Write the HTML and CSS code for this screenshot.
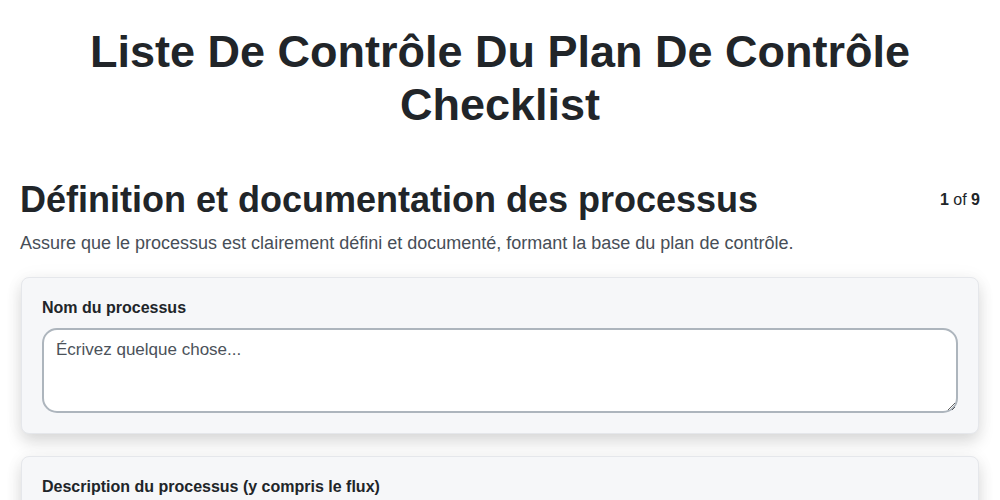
FILE: index.html
```html
<!DOCTYPE html>
<html lang="fr">
<head>
    <meta charset="UTF-8">
    <meta name="viewport" content="width=device-width, initial-scale=1.0">
    <title>Liste De Contrôle Du Plan De Contrôle Checklist</title>
    <link rel="stylesheet" href="styles.css">
</head>
<body>
    <div class="page">
        <h1 class="title">Liste De Contrôle Du Plan De Contrôle Checklist</h1>

        <div class="section-header">
            <h2>Définition et documentation des processus</h2>
            <div class="step"><b>1</b> of <b>9</b></div>
        </div>
        <p class="section-desc">Assure que le processus est clairement défini et documenté, formant la base du plan de contrôle.</p>

        <div class="card">
            <label for="nom">Nom du processus</label>
            <textarea id="nom" placeholder="Écrivez quelque chose..."></textarea>
        </div>

        <div class="card">
            <label for="desc">Description du processus (y compris le flux)</label>
            <textarea id="desc" placeholder="Écrivez quelque chose..."></textarea>
        </div>
    </div>
</body>
</html>
```

FILE: styles.css
```css
body {
    font-family: 'Liberation Sans', Arial, sans-serif;
    color: #212529;
    background-color: #ffffff;
    margin: 0;
    padding: 0;
}

.page {
    padding: 20px;
}

.title {
    font-size: 45px;
    line-height: 53px;
    font-weight: bold;
    text-align: center;
    margin: 5px 40px 47px 40px;
}

.section-header {
    display: flex;
    justify-content: space-between;
    align-items: flex-start;
}

.section-header h2 {
    font-size: 36px;
    margin: 0;
    line-height: 1.2;
}

.step {
    font-size: 16px;
    margin-top: 13px;
}

.section-desc {
    font-size: 18px;
    color: #474e57;
    margin: 12px 0 23px 0;
}

.card {
    background-color: #f6f7f9;
    border: 1px solid #e5e7eb;
    border-radius: 8px;
    box-shadow: 0 8px 16px rgba(0, 0, 0, 0.14), 0 0 20px rgba(0, 0, 0, 0.04);
    padding: 21px 20px 20px 20px;
    margin: 0 1px 22px 1px;
}

.card label {
    display: block;
    font-size: 16px;
    font-weight: bold;
    margin-bottom: 11px;
}

.card textarea {
    display: block;
    width: 100%;
    height: 85px;
    box-sizing: border-box;
    border: 2px solid #adb5bd;
    border-radius: 15px;
    padding: 10px 12px;
    font-family: 'Liberation Sans', Arial, sans-serif;
    font-size: 17px;
    background-color: #ffffff;
}

.card textarea::placeholder {
    color: #4b525a;
}
```
